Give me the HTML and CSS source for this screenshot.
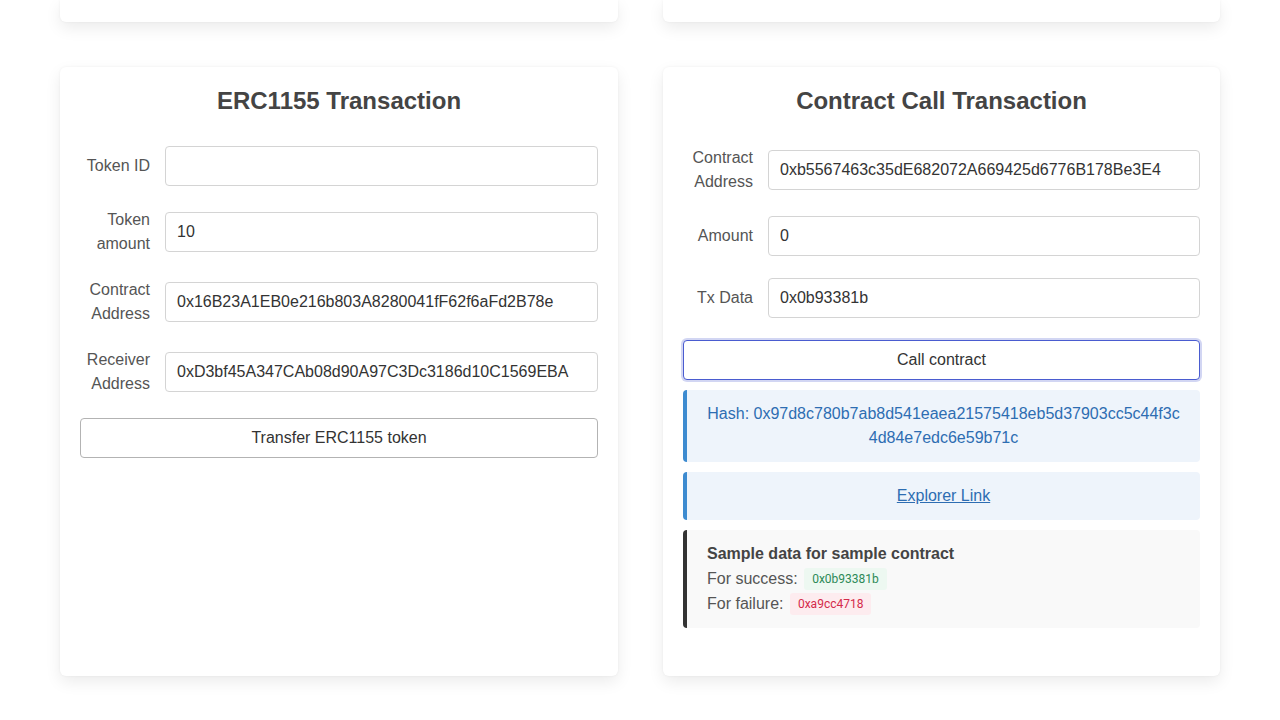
FILE: index.html
```html
<!DOCTYPE html>
<html lang="en">
<head>
<meta charset="utf-8">
<title>Transactions</title>
<link rel="stylesheet" href="styles.css">
</head>
<body>
<div class="page">
  <div class="grid top-row">
    <div class="card card-stub"></div>
    <div class="card card-stub"></div>
  </div>

  <div class="grid">
    <section class="card">
      <h2 class="card-title">ERC1155 Transaction</h2>
      <div class="form-row">
        <label class="form-label">Token ID</label>
        <input class="form-input" type="text" value="">
      </div>
      <div class="form-row">
        <label class="form-label">Token amount</label>
        <input class="form-input" type="text" value="10">
      </div>
      <div class="form-row">
        <label class="form-label">Contract Address</label>
        <input class="form-input" type="text" value="0x16B23A1EB0e216b803A8280041fF62f6aFd2B78e">
      </div>
      <div class="form-row">
        <label class="form-label">Receiver Address</label>
        <input class="form-input" type="text" value="0xD3bf45A347CAb08d90A97C3Dc3186d10C1569EBA">
      </div>
      <button class="btn" type="button">Transfer ERC1155 token</button>
    </section>

    <section class="card card-right">
      <h2 class="card-title">Contract Call Transaction</h2>
      <div class="form-row">
        <label class="form-label">Contract Address</label>
        <input class="form-input" type="text" value="0xb5567463c35dE682072A669425d6776B178Be3E4">
      </div>
      <div class="form-row">
        <label class="form-label">Amount</label>
        <input class="form-input" type="text" value="0">
      </div>
      <div class="form-row">
        <label class="form-label">Tx Data</label>
        <input class="form-input" type="text" value="0x0b93381b">
      </div>
      <button class="btn btn-focus" type="button">Call contract</button>
      <div class="alert alert-info alert-hash">Hash: 0x97d8c780b7ab8d541eaea21575418eb5d37903cc5c44f3c4d84e7edc6e59b71c</div>
      <div class="alert alert-info"><a class="alert-link" href="#">Explorer Link</a></div>
      <div class="note">
        <div class="note-title">Sample data for sample contract</div>
        <div class="note-line">For success: <code class="badge badge-success">0x0b93381b</code></div>
        <div class="note-line">For failure: <code class="badge badge-fail">0xa9cc4718</code></div>
      </div>
    </section>
  </div>
</div>
</body>
</html>
```

FILE: styles.css
```css
* { box-sizing: border-box; }

html, body {
  margin: 0;
  padding: 0;
  background: #ffffff;
}

body {
  font-family: "Liberation Sans", Arial, sans-serif;
  font-size: 16px;
  line-height: 24px;
  color: #444;
  overflow: hidden;
  height: 720px;
}

.page {
  width: 1160px;
  margin: 0 auto;
  display: flex;
  flex-direction: column;
  gap: 45px;
}

.grid {
  display: grid;
  grid-template-columns: 558px 557px;
  column-gap: 45px;
}

.card {
  background: #fff;
  border-radius: 6px;
  box-shadow: 0 6px 16px rgba(0, 0, 0, 0.08), 0 0 3px rgba(0, 0, 0, 0.05);
  padding: 20px 20px 48px;
  display: flex;
  flex-direction: column;
}

.top-row .card-stub {
  height: 22px;
  padding: 0;
  border-radius: 0 0 6px 6px;
}

.card-title {
  margin: 0 0 31px;
  font-size: 24px;
  line-height: 28px;
  font-weight: bold;
  text-align: center;
  color: #444;
}

.form-row {
  display: flex;
  align-items: center;
  margin-bottom: 22px;
  min-height: 40px;
}

.form-label {
  flex: 0 0 85px;
  padding-right: 15px;
  text-align: right;
  color: #555;
  font-size: 16px;
  line-height: 24px;
}

.form-input {
  flex: 1;
  min-width: 0;
  height: 40px;
  border: 1px solid #d4d4d4;
  border-radius: 4px;
  padding: 0 11px;
  font-family: "Liberation Sans", Arial, sans-serif;
  font-size: 16px;
  color: #333;
  background: #fff;
  outline: none;
}

.btn {
  height: 40px;
  width: 100%;
  border: 1px solid #b3b3b3;
  border-radius: 4px;
  background: #fff;
  font-family: "Liberation Sans", Arial, sans-serif;
  font-size: 16px;
  color: #333;
  padding: 0;
}

.btn-focus {
  border-color: #4a5cd0;
  box-shadow: 0 0 0 2px rgba(74, 92, 208, 0.25);
  margin-bottom: 10px;
}

.alert {
  border-radius: 4px;
  padding: 12px 16px;
  text-align: center;
  margin-bottom: 10px;
}

.alert-hash {
  word-break: break-all;
}

.alert-info {
  background: #eef4fb;
  border-left: 4px solid #3d8bd0;
  color: #2d6db2;
}

.alert-link {
  color: #2d6db2;
  text-decoration: underline;
}

.note {
  background: #f9f9f9;
  border-left: 4px solid #333;
  border-radius: 4px;
  padding: 12px 20px;
  color: #555;
}

.note-title {
  font-weight: bold;
  color: #444;
  line-height: 24px;
}

.note-line {
  line-height: 25px;
}

.badge {
  display: inline-block;
  font-family: Roboto, "Liberation Sans", sans-serif;
  font-size: 12px;
  line-height: 22px;
  padding: 0 8px;
  border-radius: 3px;
  vertical-align: 1px;
  margin-left: 2px;
}

.badge-success {
  background: #edf8f1;
  color: #2c8a57;
}

.badge-fail {
  background: #fdecef;
  color: #d42a4a;
}
```
